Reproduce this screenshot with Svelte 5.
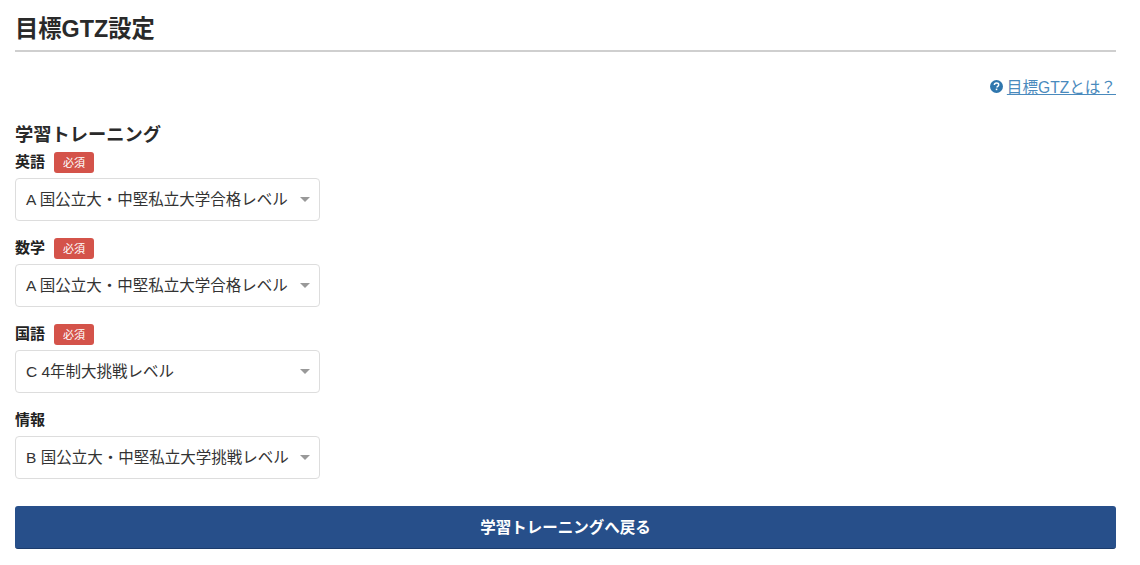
<script>
  const fields = [
    { label: '英語', required: true, value: 'A 国公立大・中堅私立大学合格レベル' },
    { label: '数学', required: true, value: 'A 国公立大・中堅私立大学合格レベル' },
    { label: '国語', required: true, value: 'C 4年制大挑戦レベル' },
    { label: '情報', required: false, value: 'B 国公立大・中堅私立大学挑戦レベル' }
  ];
</script>

<main class="page">
  <h1>目標GTZ設定</h1>

  <div class="help">
    <svg class="help-icon" width="13" height="13" viewBox="0 0 16 16" aria-hidden="true">
      <circle cx="8" cy="8" r="8" fill="#2f76ad" />
      <path d="M5.4 6.2c0-1.5 1.1-2.4 2.7-2.4s2.6.9 2.6 2.1c0 1-.6 1.5-1.3 2-.6.4-.8.6-.8 1.2" fill="none" stroke="#fff" stroke-width="1.8" />
      <rect x="7.1" y="10.6" width="1.9" height="1.9" fill="#fff" />
    </svg>
    <a href="#gtz">目標GTZとは？</a>
  </div>

  <h2>学習トレーニング</h2>

  {#each fields as field}
    <div class="field">
      <div class="label">
        <span class="label-text">{field.label}</span>
        {#if field.required}
          <span class="badge">必須</span>
        {/if}
      </div>
      <div class="select">
        <span>{field.value}</span>
        <i class="caret"></i>
      </div>
    </div>
  {/each}

  <button type="button">学習トレーニングへ戻る</button>
</main>

<style>
  :global(body) {
    background: #fff;
    font-family: "Liberation Sans", "Noto Sans CJK JP", sans-serif;
    color: #222;
  }

  .page {
    padding: 13px 24px 16px 15px;
  }

  h1 {
    margin: 0;
    height: 37px;
    line-height: 32px;
    font-size: 23.3px;
    font-weight: 700;
    color: #2a2a2a;
    border-bottom: 2px solid #cfcfcf;
  }

  .help {
    display: flex;
    justify-content: flex-end;
    align-items: center;
    gap: 4px;
    margin-top: 24px;
    height: 20px;
    font-size: 15.6px;
  }

  .help a {
    color: #4a8abd;
    text-decoration: underline;
  }

  h2 {
    margin: 27px 0 4px;
    font-size: 18.25px;
    line-height: 24px;
    font-weight: 700;
    color: #2a2a2a;
  }

  .field {
    margin-bottom: 16px;
  }

  .label {
    display: flex;
    align-items: center;
    gap: 9px;
    height: 22px;
    margin-bottom: 5px;
    font-size: 15px;
    font-weight: 700;
  }

  .label-text {
    margin-bottom: 4px;
  }

  .badge {
    width: 40px;
    height: 21px;
    line-height: 21px;
    text-align: center;
    border-radius: 3px;
    background: #d4534a;
    color: #fff;
    font-family: "Noto Sans CJK JP", serif;
    font-size: 11px;
    font-weight: 400;
  }

  .select {
    display: flex;
    align-items: center;
    justify-content: space-between;
    box-sizing: border-box;
    width: 305px;
    height: 43px;
    padding: 0 9px 0 10px;
    background: #fff;
    border: 1px solid #ddd;
    border-radius: 4px;
    font-size: 15.5px;
    color: #333;
    white-space: nowrap;
  }

  .select span {
    margin-bottom: 3px;
  }

  .caret {
    width: 0;
    height: 0;
    border-left: 5px solid transparent;
    border-right: 5px solid transparent;
    border-top: 5px solid #999;
  }

  button {
    display: block;
    width: 100%;
    height: 43px;
    margin-top: 27px;
    padding: 0 0 3px;
    border: 0;
    border-bottom: 1px solid #1c3c6c;
    border-radius: 3px;
    background: #274f8a;
    color: #fff;
    font-family: inherit;
    font-size: 15.5px;
    font-weight: 700;
  }
</style>
